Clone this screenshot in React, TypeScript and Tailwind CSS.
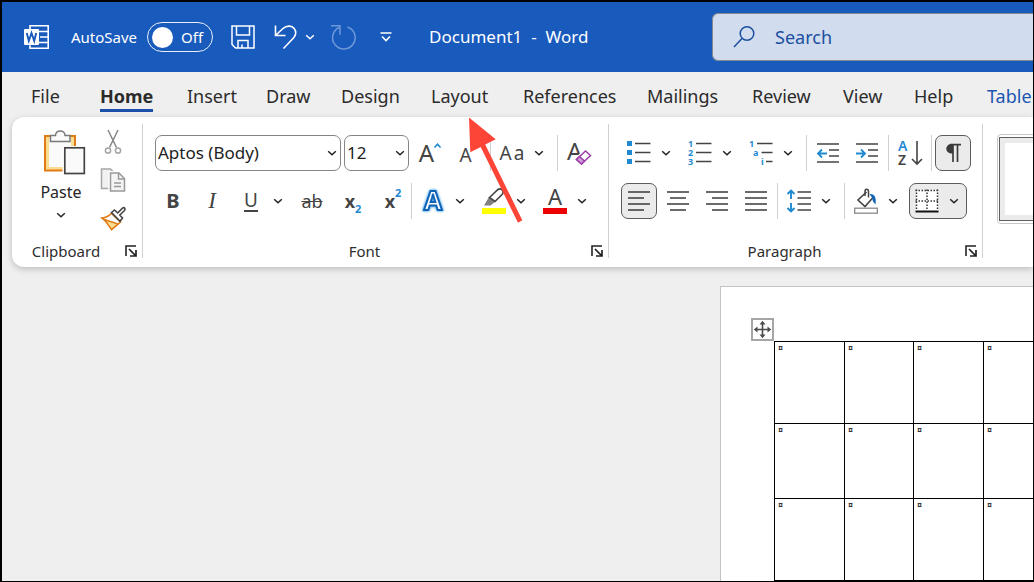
import React from "react";

type Kids = { children: React.ReactNode };

function Svg({ w, h, children, className = "" }: { w: number; h: number; className?: string } & Kids) {
  return (
    <svg width={w} height={h} viewBox={`0 0 ${w} ${h}`} fill="none" aria-hidden="true" className={`block shrink-0 overflow-visible ${className}`}>
      {children}
    </svg>
  );
}

function Chevron() {
  return (
    <Svg w={10} h={6}>
      <path d="M1.200 1.200L5 4.800l3.800-3.600" stroke="currentColor" strokeWidth="1.500" />
    </Svg>
  );
}

/* ---------- Title bar ---------- */

function WordLogo() {
  return (
    <Svg w={26} h={26}>
      <path d="M6 5V1.800h18.200v22.400H6v-3M14 7.500h10M16 13h8M14 18.500h10" stroke="#fff" strokeWidth="1.600" />
      <rect x="0" y="5" width="15" height="16" rx="1" fill="#fff" />
      <path d="M2.800 9l2 8 2.700-8 2.700 8 2-8" stroke="#195abd" strokeWidth="1.900" />
    </Svg>
  );
}

function TitleBar() {
  return (
    <header className="flex h-[70px] shrink-0 items-center bg-[#195abd] pl-[22px] text-white">
      <WordLogo />
      <label className="ml-[21px] flex items-center gap-[10px] whitespace-nowrap text-[15px]">
        AutoSave
        <input type="checkbox" className="peer sr-only" />
        <span className="flex h-[30px] w-[66px] items-center gap-[8px] rounded-full border border-white/90 pl-[4px]">
          <span className="h-[21px] w-[21px] rounded-full bg-white" />
          Off
        </span>
      </label>
      <button aria-label="Save" className="ml-[18px]">
        <Svg w={24} h={24}>
          <path d="M1 1h22v22H4.500L1 19.500zM5.500 1v9h13V1M7 23v-7.500h10V23M11 23v-3.500" stroke="#fff" strokeWidth="1.500" />
        </Svg>
      </button>
      <button aria-label="Undo" className="ml-[19px]">
        <Svg w={24} h={26}>
          <path d="M1.500 1.500v10h10M2 11L9 4.500c4-3.600 9-2.800 11.200 0 2.400 3 1.800 7-.7 9.500L9.500 24.500" stroke="#fff" strokeWidth="1.600" />
        </Svg>
      </button>
      <button aria-label="Undo options" className="ml-[7px]">
        <Chevron />
      </button>
      <button aria-label="Redo" className="ml-[16px] text-[#6f98d8]">
        <Svg w={24} h={26}>
          <path d="M0 1.800h9v9M8 3.500A11.300 11.300 0 1 0 16.500 3" stroke="currentColor" strokeWidth="1.500" />
        </Svg>
      </button>
      <button aria-label="Customize toolbar" className="ml-[25px]">
        <Svg w={12} h={10}>
          <path d="M.5 1h11M2 4.500L6 8.500l4-4" stroke="#fff" strokeWidth="1.600" />
        </Svg>
      </button>
      <h1 className="ml-[37px] w-[283px] shrink-0 whitespace-pre text-[17px]">Document1  -  Word</h1>
      <label className="flex h-[48px] min-w-0 flex-1 items-center gap-[20px] rounded-l-[6px] border border-r-0 border-[#84888f] bg-[#d1dcee] pl-[20px] text-[#1b4f9f]">
        <Svg w={22} h={24}>
          <circle cx="14" cy="8.500" r="6.800" stroke="currentColor" strokeWidth="1.500" />
          <path d="M9 13.500L1 22" stroke="currentColor" strokeWidth="1.500" />
        </Svg>
        <input aria-label="Search" placeholder="Search" className="w-full min-w-0 bg-transparent text-[18px] outline-none placeholder:text-[#1b4f9f]" />
      </label>
    </header>
  );
}

/* ---------- Tabs ---------- */

const tabs = ["File", "Home", "Insert", "Draw", "Design", "Layout", "References", "Mailings", "Review", "View", "Help", "Table"];

function Tabs() {
  return (
    <nav className="grid h-[45px] shrink-0 grid-cols-[69px_87px_79px_75px_90px_92px_124px_105px_91px_71px_73px_1fr] overflow-hidden pl-[29px] pt-[9px] text-[18px] leading-[30px] text-[#2b2b2b]">
      {tabs.map((t) => (
        <div key={t}>
          <button
            className={
              t === "Home"
                ? "h-[31px] border-b-3 border-[#1b4fa8] font-bold text-[#2b2b2b]"
                : t === "Table"
                  ? "text-[#1d56b0]"
                  : ""
            }
          >
            {t}
          </button>
        </div>
      ))}
    </nav>
  );
}

/* ---------- Ribbon parts ---------- */

function Btn({ label, on, children }: { label: string; on?: boolean } & Kids) {
  return (
    <button
      aria-label={label}
      className={`flex h-[36px] w-[36px] shrink-0 items-center justify-center rounded-[7px] border ${on ? "border-[#5c5c5c] bg-[#ebebeb]" : "border-transparent"}`}
    >
      {children}
    </button>
  );
}

function Split({ label, on, wide, children }: { label: string; on?: boolean; wide?: boolean } & Kids) {
  return (
    <button
      aria-label={label}
      className={`flex h-[36px] shrink-0 items-center gap-[10px] rounded-[7px] border pl-[5px] text-[#222] ${wide ? "w-[60px]" : "w-[58px]"} ${on ? "border-[#5c5c5c] bg-[#ebebeb]" : "border-transparent"}`}
    >
      <span className="flex w-[24px] shrink-0 justify-center">{children}</span>
      <Chevron />
    </button>
  );
}

function Sep() {
  return <span className="h-[36px] w-px shrink-0 bg-[#d0d0d0]" />;
}

function Row({ children }: Kids) {
  return <div className="flex h-[36px] items-center gap-[3px]">{children}</div>;
}

function Group({ name, className = "", children }: { name: string; className?: string } & Kids) {
  return (
    <section aria-label={name} className="flex shrink-0 flex-col justify-between border-r border-[#d0d0d0]">
      <div className={className}>{children}</div>
      <div className="flex h-[14px] items-center">
        <span className="flex-1 text-center text-[15px] leading-[14px] text-[#2e2e2e]">{name}</span>
        <button aria-label={`${name} settings`} className="flex w-[22px] justify-center">
          <Svg w={12} h={12}>
            <path d="M1 11V1h10" stroke="#222" strokeWidth="1.600" />
            <path d="M4 4l6.500 6.500M11 5v6H5" stroke="#222" strokeWidth="1.700" />
          </Svg>
        </button>
      </div>
    </section>
  );
}

function Combo({ label, value, className }: { label: string; value: string; className: string }) {
  return (
    <span className={`relative flex h-[36px] shrink-0 items-center text-[#222] ${className}`}>
      <select aria-label={label} className="h-full w-full appearance-none rounded-[7px] border border-[#858585] bg-white pl-[2px] text-[17px] text-[#222]">
        <option>{value}</option>
      </select>
      <span className="pointer-events-none absolute right-[4px]">
        <Chevron />
      </span>
    </span>
  );
}

/* ---------- Clipboard ---------- */

function Clipboard() {
  return (
    <Group name="Clipboard" className="flex gap-[12px] pl-[22px] pr-[16px] pt-[5px]">
      <button className="flex w-[54px] flex-col items-center text-[16px] leading-[24px] text-[#262626]">
        <Svg w={44} h={46} className="ml-[6px]">
          <rect x="3" y="7" width="30" height="34.500" fill="#fbdd92" stroke="#e07b15" strokeWidth="2" />
          <rect x="7" y="10" width="22" height="28" fill="#fafafa" />
          <path d="M8.500 6.500h5c0-6 9.500-6 9.500 0h5v6h-19.500z" fill="#fafafa" stroke="#797979" strokeWidth="1.500" />
          <rect x="20.500" y="17" width="23" height="29" fill="#fff" />
          <rect x="22.800" y="18.800" width="19.500" height="25.700" fill="#fafafa" stroke="#444" strokeWidth="1.700" />
        </Svg>
        <span className="mt-[5px]">Paste</span>
        <span className="mt-[8px]">
          <Chevron />
        </span>
      </button>
      <div className="flex w-[26px] flex-col items-center gap-[14px] pt-[1px]">
        <button aria-label="Cut">
          <Svg w={18} h={24}>
            <path d="M4 0l8.500 17.500M14 0L5.500 17.500" stroke="#858585" strokeWidth="1.500" />
            <circle cx="4" cy="20.500" r="2.600" stroke="#a3a3a3" strokeWidth="1.500" />
            <circle cx="14" cy="20.500" r="2.600" stroke="#a3a3a3" strokeWidth="1.500" />
          </Svg>
        </button>
        <button aria-label="Copy">
          <Svg w={26} h={24}>
            <path d="M8.500 20.500H1.500V1h9l3 3" fill="#f1f1f1" stroke="#a6a6a6" strokeWidth="1.500" />
            <path d="M10.500 5H19l5.500 5.500V23h-14z" fill="#f4f4f4" stroke="#fff" strokeWidth="4" />
            <path d="M10.500 5H19l5.500 5.500V23h-14z" fill="#f4f4f4" stroke="#999" strokeWidth="1.500" />
            <path d="M18.500 5v6h6M14 15h7M14 18.500h7" stroke="#999" strokeWidth="1.400" />
          </Svg>
        </button>
        <button aria-label="Format Painter">
          <Svg w={26} h={24}>
            <path d="M2 12c4-.5 7-2 9.500-4.500l9 8.500-9 7.500C9 18 6 15 2 12z" fill="#fff" stroke="#e07b15" strokeWidth="1.600" />
            <path d="M4.500 13.500l13.500 4.500-6.500 5.500z" fill="#fbdd92" stroke="#e07b15" strokeWidth="1.400" />
            <path d="M11.500 6.500l3-2.500 3.200 3L22.500 2.200c2-1.400 3.300.8 2 2.300L19.800 9l2.700 3-2.500 3.200z" fill="#fff" stroke="#444" strokeWidth="1.600" />
          </Svg>
        </button>
      </div>
    </Group>
  );
}

/* ---------- Font ---------- */

const glyph = "text-[#444] leading-[24px]";

function FontGroup() {
  return (
    <Group name="Font" className="flex flex-col gap-[12px] pl-[12px] pr-[11px] pt-[11px]">
      <Row>
        <Combo label="Font name" value="Aptos (Body)" className="w-[186px]" />
        <Combo label="Font size" value="12" className="w-[65px]" />
        <Btn label="Increase font size">
          <span className={`text-[24px] ${glyph}`}>A</span>
          <Svg w={7} h={5} className="mb-[16px]">
            <path d="M.500 4.500l3-3.300 3 3.300" stroke="#1f8ad2" strokeWidth="1.700" />
          </Svg>
        </Btn>
        <Btn label="Decrease font size">
          <span className={`pt-[3px] text-[19px] ${glyph}`}>A</span>
          <Svg w={7} h={5} className="mb-[16px]">
            <path d="M.500 .5l3 3.300 3-3.300" stroke="#1f8ad2" strokeWidth="1.700" />
          </Svg>
        </Btn>
        <Sep />
        <Split label="Change case" wide>
          <span className={`flex gap-[2px] text-[19px] ${glyph}`}>
            <span>A</span>
            <span>a</span>
          </span>
        </Split>
        <Sep />
        <Btn label="Clear formatting">
          <Svg w={26} h={26}>
            <text x="1" y="20" fontSize="24" fontFamily="Noto Sans" fill="#444">A</text>
            <path d="M10.500 19.500l9-8.500 5 4.500-9 8.500z" fill="#fff" stroke="#fff" strokeWidth="4" />
            <path d="M10.500 19.500l9-8.500 5 4.500-9 8.500z" fill="#fff" stroke="#9b3fa6" strokeWidth="1.500" />
            <path d="M10.500 19.500l3-3 5 4.500-3 3z" fill="#d59bdc" stroke="#9b3fa6" strokeWidth="1.500" />
          </Svg>
        </Btn>
      </Row>
      <Row>
        <Btn label="Bold">
          <span className={`text-[20px] font-bold ${glyph}`}>B</span>
        </Btn>
        <Btn label="Italic">
          <span className={`font-['Liberation_Serif'] text-[23px] italic ${glyph}`}>I</span>
        </Btn>
        <Split label="Underline">
          <span className="border-b-2 border-[#444] text-[19px] leading-[20px] text-[#444]">U</span>
        </Split>
        <Btn label="Strikethrough">
          <span className={`px-[2px] text-[18px] line-through ${glyph}`}>ab</span>
        </Btn>
        <Btn label="Subscript">
          <span className={`pl-[4px] text-[18px] font-bold ${glyph}`}>x</span>
          <span className="pt-[16px] text-[11px] font-bold leading-[14px] text-[#1f8ad2]">2</span>
        </Btn>
        <Btn label="Superscript">
          <span className={`pl-[6px] text-[18px] font-bold ${glyph}`}>x</span>
          <span className="pb-[16px] text-[11px] font-bold leading-[14px] text-[#1f8ad2]">2</span>
        </Btn>
        <Sep />
        <Split label="Text effects">
          <Svg w={24} h={26}>
            <g fontSize="26" fontWeight="700" fontFamily="Noto Sans" textAnchor="middle">
              <text x="12" y="22" fill="#fff" stroke="#1064b8" strokeWidth="2" className="[filter:drop-shadow(0_0_1px_#5eb0ea)_drop-shadow(0_0_1px_#8cc8f2)]">A</text>
            </g>
          </Svg>
        </Split>
        <Split label="Highlight color">
          <Svg w={24} h={26}>
            <path d="M2 17.500l5-8.500 6 5-4.500 3.500z" fill="#808080" />
            <path d="M7.500 9.500L16 1.500c3-2 6.500 1.500 4.500 4.500L13 13.500z" fill="#fff" stroke="#444" strokeWidth="1.600" />
            <rect y="20" width="24" height="6" fill="#ffff00" />
          </Svg>
        </Split>
        <Split label="Font color">
          <Svg w={24} h={26}>
            <text x="12" y="17" fontSize="22" fontFamily="Noto Sans" textAnchor="middle" fill="#444">A</text>
            <rect y="20" width="24" height="6" fill="#ee0000" />
          </Svg>
        </Split>
      </Row>
    </Group>
  );
}

/* ---------- Paragraph ---------- */

function Lines({ d }: { d: string }) {
  return (
    <Svg w={22} h={22}>
      <path d={d} stroke="#3b3b3b" strokeWidth="1.600" />
    </Svg>
  );
}

function Indent({ arrow }: { arrow: string }) {
  return (
    <Svg w={22} h={22}>
      <path d="M0 2h22M12 8h10M12 14h10M0 20h22" stroke="#444" strokeWidth="1.500" />
      <path d={arrow} stroke="#1f8ad2" strokeWidth="1.800" />
    </Svg>
  );
}

function ParagraphGroup() {
  return (
    <Group name="Paragraph" className="flex flex-col gap-[12px] pl-[12px] pr-[11px] pt-[11px]">
      <Row>
        <Split label="Bullets">
          <Svg w={24} h={24}>
            <path d="M0 0h5v5H0zM0 9h5v5H0zM0 18h5v5H0z" fill="#1f8ad2" />
            <path d="M8 2.500h15.500M8 11.500h15.500M8 20.500h15.500" stroke="#444" strokeWidth="1.500" />
          </Svg>
        </Split>
        <Split label="Numbering">
          <Svg w={24} h={26}>
            <g fill="#1f8ad2" fontSize="9" fontWeight="700" fontFamily="Noto Sans">
              <text x="0" y="7">1</text>
              <text x="0" y="16">2</text>
              <text x="0" y="25">3</text>
            </g>
            <path d="M8 3.500h15.500M8 12.500h15.500M8 21.500h15.500" stroke="#444" strokeWidth="1.500" />
          </Svg>
        </Split>
        <Split label="Multilevel list" wide>
          <Svg w={24} h={26}>
            <g fill="#1f8ad2" fontSize="9" fontWeight="700" fontFamily="Noto Sans">
              <text x="0" y="7">1</text>
              <text x="4" y="16">a</text>
              <text x="12" y="25">i</text>
            </g>
            <path d="M8 3.500h15.500M12.500 12.500h11M17 21.500h6.500" stroke="#444" strokeWidth="1.500" />
          </Svg>
        </Split>
        <Sep />
        <Btn label="Decrease indent">
          <Indent arrow="M10 11.500H1.500M5 7.500l-4 4 4 4" />
        </Btn>
        <Btn label="Increase indent">
          <Indent arrow="M0 11.500h8.500M5 7.500l4 4-4 4" />
        </Btn>
        <Sep />
        <Btn label="Sort">
          <Svg w={26} h={28}>
            <g fontSize="14" fontWeight="600" fontFamily="Noto Sans">
              <text x="1" y="12" fill="#1f8ad2">A</text>
              <text x="1" y="26" fill="#444">Z</text>
            </g>
            <path d="M20 2v23M15 20l5 5 5-5" stroke="#444" strokeWidth="1.600" />
          </Svg>
        </Btn>
        <Sep />
        <Btn label="Show formatting marks" on>
          <Svg w={18} h={20}>
            <path d="M9 10.500H7A4.700 4.700 0 0 1 7 1h2z" fill="#3b3b3b" />
            <path d="M6 1.700h11M9 1v18M13.500 1v18" stroke="#3b3b3b" strokeWidth="1.700" />
          </Svg>
        </Btn>
      </Row>
      <Row>
        <Btn label="Align left" on>
          <Lines d="M0 2h22M0 8h16M0 14h22M0 20h16" />
        </Btn>
        <Btn label="Center">
          <Lines d="M0 2h22M3 8h16M0 14h22M3 20h16" />
        </Btn>
        <Btn label="Align right">
          <Lines d="M0 2h22M6 8h16M0 14h22M6 20h16" />
        </Btn>
        <Btn label="Justify">
          <Lines d="M0 2h22M0 8h22M0 14h22M0 20h22" />
        </Btn>
        <Sep />
        <Split label="Line spacing" wide>
          <Svg w={24} h={24}>
            <path d="M4 1.500V10M.5 5L4 1.500 7.500 5M4 14v8.500M.5 19L4 22.500 7.500 19" stroke="#1f8ad2" strokeWidth="1.900" />
            <path d="M10.500 3H24M10.500 9H24M10.500 15H24M10.500 21H24" stroke="#444" strokeWidth="1.600" />
          </Svg>
        </Split>
        <Sep />
        <Split label="Shading">
          <Svg w={24} h={26}>
            <path d="M12.500 4L4 12l7 6.500 8-9" stroke="#444" strokeWidth="1.600" />
            <path d="M11 8V3.500C11 .5 14.500.5 14.500 3.500V9.500" stroke="#444" strokeWidth="1.500" />
            <path d="M15.500 6c5-.5 7 3 6 10.500l-2.500-3-1-4z" fill="#1064b8" />
            <rect x=".7" y="20.200" width="22.600" height="5" fill="#fff" stroke="#8a8a8a" strokeWidth="1.300" />
          </Svg>
        </Split>
        <Split label="Borders" on>
          <Svg w={24} h={24}>
            <rect x="1" y="1" width="22" height="22" fill="#fff" />
            <path d="M.5 1.500h23M.5 12h23" stroke="#333" strokeWidth="1.500" strokeDasharray="1.500 1.500" />
            <path d="M1.500 .5V21M12 .5V21M22.500 .5V21" stroke="#333" strokeWidth="1.500" strokeDasharray="1.500 1.500" />
            <path d="M.5 22.500h23" stroke="#111" strokeWidth="1.800" />
          </Svg>
        </Split>
      </Row>
    </Group>
  );
}

function Ribbon() {
  return (
    <div className="relative z-10 ml-[10px] flex h-[150px] shrink-0 overflow-hidden rounded-l-[12px] bg-white pb-[9px] pt-[7px] shadow-[0_2px_6px_rgba(0,0,0,0.22)]">
      <Clipboard />
      <FontGroup />
      <ParagraphGroup />
      <button aria-label="Style gallery" className="ml-[14px] mt-[10px] flex h-[90px] min-w-[80px] flex-1 rounded-l-[4px] border border-[#c8c8c8] py-[2px] pl-px">
        <span className="h-full w-full border border-[#606060] bg-white shadow-[inset_0_0_0_5px_#ebebeb]" />
      </button>
    </div>
  );
}

/* ---------- Document ---------- */

const rowHeights = ["h-[82px]", "h-[75px]", "h-[82px]"];

function DocumentArea() {
  return (
    <main className="flex min-h-0 flex-1 overflow-hidden pl-[718px] pt-[19px]">
      <div className="flex min-w-0 flex-1 flex-col items-start overflow-hidden border-l border-t border-[#c3c3c3] bg-white pl-[30px] pt-[31px]">
        <button aria-label="Move table" className="flex h-[23px] w-[23px] shrink-0 items-center justify-center border-2 border-[#a6a6a6] bg-white">
          <Svg w={19} h={19}>
            <path d="M9.500 3v13M3 9.500h13" stroke="#4b4b4b" strokeWidth="1.600" />
            <path d="M9.500 .8l3 3.700h-6zM9.500 18.200l3-3.700h-6zM.8 9.500l3.700-3v6zM18.200 9.500l-3.700-3v6z" fill="#4b4b4b" />
          </Svg>
        </button>
        <table className="ml-[23px] w-[279px] shrink-0 table-fixed border-collapse text-[9px] leading-[8px] text-[#333]">
          <colgroup>
            <col className="w-[70px]" />
            <col className="w-[69px]" />
            <col className="w-[70px]" />
            <col className="w-[70px]" />
          </colgroup>
          <tbody>
            {rowHeights.map((h, i) => (
              <tr key={i} className={h}>
                {[0, 1, 2, 3].map((c) => (
                  <td key={c} className="border border-black pl-[3px] pt-[2px] align-top font-bold">
                    ¤
                  </td>
                ))}
              </tr>
            ))}
          </tbody>
        </table>
      </div>
    </main>
  );
}

export default function App() {
  return (
    <div className="relative flex h-screen flex-col overflow-hidden border-b border-l-2 border-r border-t-2 border-black bg-[#efefef] font-['Noto_Sans',sans-serif]">
      <TitleBar />
      <Tabs />
      <Ribbon />
      <DocumentArea />
      <svg width="60" height="110" viewBox="0 0 60 110" aria-hidden="true" className="pointer-events-none absolute left-[464px] top-[113px] z-20">
        <path d="M3 2.500L29.700 24.300 19.200 29.500 56.300 105.300 52 107.700 14.700 32 4.300 37.300z" fill="#fc4437" />
      </svg>
    </div>
  );
}
